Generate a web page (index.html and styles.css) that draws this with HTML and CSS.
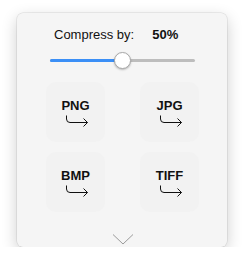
FILE: index.html
```html
<!DOCTYPE html>
<html>
<head>
<meta charset="utf-8">
<link rel="stylesheet" href="styles.css">
</head>
<body>
<div class="card">
  <div class="header">
    <span class="label">Compress by:</span>
    <span class="value">50%</span>
  </div>
  <div class="slider">
    <div class="track"><div class="fill" style="width:49%"></div></div>
    <div class="thumb"></div>
  </div>
  <div class="grid">
    <div class="btn"><span class="fmt">PNG</span><svg class="arrow" width="26" height="12" viewBox="0 0 26 12"><path d="M2.5 0.5 V4 Q2.5 7.5 6 7.5 H23.5 M19.5 3.5 L23.5 7.5 L19.5 11.5" fill="none" stroke="#111" stroke-width="1"/></svg></div>
    <div class="btn"><span class="fmt">JPG</span><svg class="arrow" width="26" height="12" viewBox="0 0 26 12"><path d="M2.5 0.5 V4 Q2.5 7.5 6 7.5 H23.5 M19.5 3.5 L23.5 7.5 L19.5 11.5" fill="none" stroke="#111" stroke-width="1"/></svg></div>
    <div class="btn"><span class="fmt">BMP</span><svg class="arrow" width="26" height="12" viewBox="0 0 26 12"><path d="M2.5 0.5 V4 Q2.5 7.5 6 7.5 H23.5 M19.5 3.5 L23.5 7.5 L19.5 11.5" fill="none" stroke="#111" stroke-width="1"/></svg></div>
    <div class="btn"><span class="fmt">TIFF</span><svg class="arrow" width="26" height="12" viewBox="0 0 26 12"><path d="M2.5 0.5 V4 Q2.5 7.5 6 7.5 H23.5 M19.5 3.5 L23.5 7.5 L19.5 11.5" fill="none" stroke="#111" stroke-width="1"/></svg></div>
  </div>
  <div class="more">
    <svg width="22" height="11" viewBox="0 0 22 11"><polyline points="1,0.5 11,10 21,0.5" fill="none" stroke="#9a9a9a" stroke-width="1"/></svg>
  </div>
</div>
</body>
</html>
```
FILE: styles.css
```css
html, body {
  margin: 0;
  padding: 0;
  background: #ffffff;
}
body {
  font-family: "Liberation Sans", Arial, Helvetica, sans-serif;
  color: #111;
}
.card {
  box-sizing: border-box;
  margin: 13px 0 0 17px;
  width: 210px;
  height: 234px;
  background: #f5f5f5;
  border-radius: 6px;
  box-shadow: 0 0 0 0.5px rgba(0,0,0,0.12), 0 5px 16px rgba(0,0,0,0.2);
  display: flex;
  flex-direction: column;
  padding-top: 14px;
}
.header {
  display: flex;
  align-items: baseline;
  padding-left: 37px;
  font-size: 13px;
  line-height: 16px;
}
.value {
  font-weight: bold;
  margin-left: 18px;
}
.slider {
  position: relative;
  margin: 9px 0 0 33px;
  width: 145px;
  height: 16px;
  display: flex;
  align-items: center;
}
.track {
  width: 100%;
  height: 3px;
  border-radius: 2px;
  background: #bdbdbd;
  overflow: hidden;
}
.fill {
  height: 100%;
  background: #3b8ff6;
}
.thumb {
  position: absolute;
  left: 64px;
  top: -0.5px;
  width: 15px;
  height: 15px;
  border-radius: 50%;
  background: #fff;
  border: 0.5px solid #a8a8a8;
  box-shadow: 0 1px 2px rgba(0,0,0,0.25);
}
.grid {
  display: grid;
  grid-template-columns: 59px 59px;
  grid-auto-rows: 60px;
  column-gap: 35px;
  row-gap: 10px;
  margin: 14px 0 0 29px;
}
.btn {
  background: #f2f2f2;
  border-radius: 10px;
  display: flex;
  flex-direction: column;
  align-items: center;
  justify-content: center;
}
.fmt {
  font-size: 13px;
  font-weight: bold;
  line-height: 15px;
}
.arrow {
  display: block;
  margin: 2px 0 0 3px;
}
.more {
  display: flex;
  justify-content: center;
  margin-top: 22px;
  padding-left: 1px;
}
.more svg {
  display: block;
}
```
